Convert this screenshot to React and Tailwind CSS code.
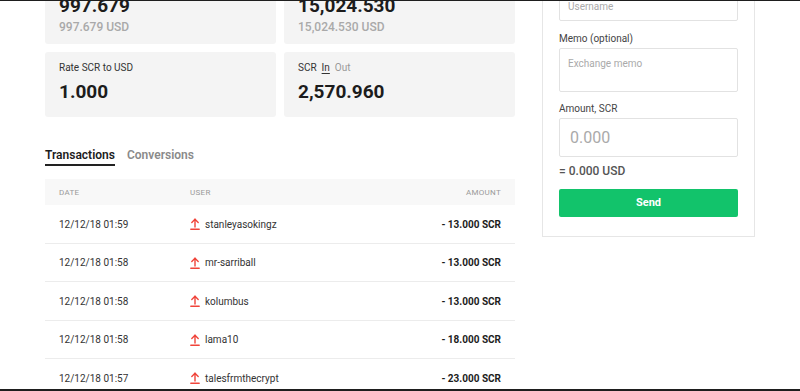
import React from "react";

function UpArrow() {
  return (
    <svg width="10" height="12" viewBox="0 0 10 12" fill="none" stroke="#f0443a" strokeWidth="1.4" strokeLinecap="round" strokeLinejoin="round">
      <path d="M5 9V1.2" />
      <path d="M1.8 4.4L5 1.2L8.2 4.4" />
      <path d="M0.8 11.2H9.2" />
    </svg>
  );
}

const rows = [
  ["12/12/18 01:59", "stanleyasokingz", "- 13.000 SCR"],
  ["12/12/18 01:58", "mr-sarriball", "- 13.000 SCR"],
  ["12/12/18 01:58", "kolumbus", "- 13.000 SCR"],
  ["12/12/18 01:58", "lama10", "- 18.000 SCR"],
  ["12/12/18 01:57", "talesfrmthecrypt", "- 23.000 SCR"],
];

export default function App() {
  return (
    <div
      className="h-[391px] w-[800px] overflow-hidden bg-white border-t border-b-2 border-[#1e1e1e] text-[#222]"
      style={{ fontFamily: "Roboto, 'Liberation Sans', sans-serif" }}
    >
      <div className="flex gap-[27px] px-[45px]">
        {/* Left column */}
        <div className="w-[470px] flex flex-col">
          <div className="grid grid-cols-2 gap-2 -mt-[17px]">
            <div className="bg-[#f4f4f4] rounded-[3px] pl-[14px] pt-[9px] pb-[9px]">
              <div className="text-[19px] leading-[26px] font-bold text-[#1c1c1c]">997.679</div>
              <div className="text-[12px] leading-[16px] font-medium text-[#a9a9a9]">997.679 USD</div>
            </div>
            <div className="bg-[#f4f4f4] rounded-[3px] pl-[14px] pt-[9px] pb-[9px]">
              <div className="text-[19px] leading-[26px] font-bold text-[#1c1c1c]">15,024.530</div>
              <div className="text-[12px] leading-[16px] font-medium text-[#a9a9a9]">15,024.530 USD</div>
            </div>
            <div className="bg-[#f4f4f4] rounded-[3px] pl-[14px] pt-[9px] pb-[12px]">
              <div className="text-[10px] leading-[13px] text-[#333]">Rate SCR to USD</div>
              <div className="mt-[5px] text-[19px] leading-[26px] font-bold text-[#1c1c1c]">1.000</div>
            </div>
            <div className="bg-[#f4f4f4] rounded-[3px] pl-[14px] pt-[9px] pb-[12px]">
              <div className="text-[10px] leading-[13px] text-[#333] flex gap-[5px]">
                <span>SCR</span>
                <span className="underline underline-offset-2 text-[#333]">In</span>
                <span className="text-[#999]">Out</span>
              </div>
              <div className="mt-[5px] text-[19px] leading-[26px] font-bold text-[#1c1c1c]">2,570.960</div>
            </div>
          </div>

          {/* Tabs */}
          <div className="mt-[30px] flex gap-[12px] text-[12px] leading-[16px] font-semibold">
            <div className="border-b-2 border-[#222] pb-[1px] text-[#1c1c1c]">Transactions</div>
            <div className="text-[#8a8a8a]">Conversions</div>
          </div>

          {/* Table */}
          <div className="mt-[13px]">
            <div className="h-[26px] bg-[#f8f8f8] flex items-center pt-[1px] px-[14px] text-[8px] tracking-[0.3px] text-[#9a9a9a] uppercase">
              <div className="w-[131px]">Date</div>
              <div className="flex-1">User</div>
              <div>Amount</div>
            </div>
            {rows.map((r, i) => (
              <div key={i} className="h-[38.5px] flex items-center pt-[1px] px-[14px] border-b border-[#ececec] text-[10px]">
                <div className="w-[131px] text-[#333]">{r[0]}</div>
                <div className="flex-1 flex items-center gap-[5px] text-[#333]">
                  <UpArrow />
                  <span>{r[1]}</span>
                </div>
                <div className="font-bold text-[#1c1c1c]">{r[2]}</div>
              </div>
            ))}
          </div>
        </div>

        {/* Right panel */}
        <div className="w-[213px] self-start -mt-[32px] border border-[#e6e6e6] px-[16px] pt-[16px] pb-[19px]">
          <div className="h-[35px] border border-[#e2e2e2] rounded-[2px] px-[8px] flex items-end pb-[6px] text-[10px] text-[#aaa]">
            Username
          </div>
          <div className="mt-[11px] text-[10px] leading-[14px] text-[#444]">Memo (optional)</div>
          <div className="mt-[2px] h-[44px] border border-[#e2e2e2] rounded-[2px] px-[8px] pt-[8px] text-[10px] leading-[14px] text-[#aaa]">
            Exchange memo
          </div>
          <div className="mt-[10px] text-[10px] leading-[14px] text-[#444]">Amount, SCR</div>
          <div className="mt-[2px] h-[39px] border border-[#e2e2e2] rounded-[2px] px-[10px] flex items-center text-[16px] text-[#aaa]">
            0.000
          </div>
          <div className="mt-[6px] text-[12px] leading-[16px] font-medium text-[#555]">= 0.000 USD</div>
          <div className="mt-[10px] h-[28px] bg-[#12c36b] rounded-[2px] flex items-center justify-center text-[11px] font-bold text-white">
            Send
          </div>
        </div>
      </div>
    </div>
  );
}
